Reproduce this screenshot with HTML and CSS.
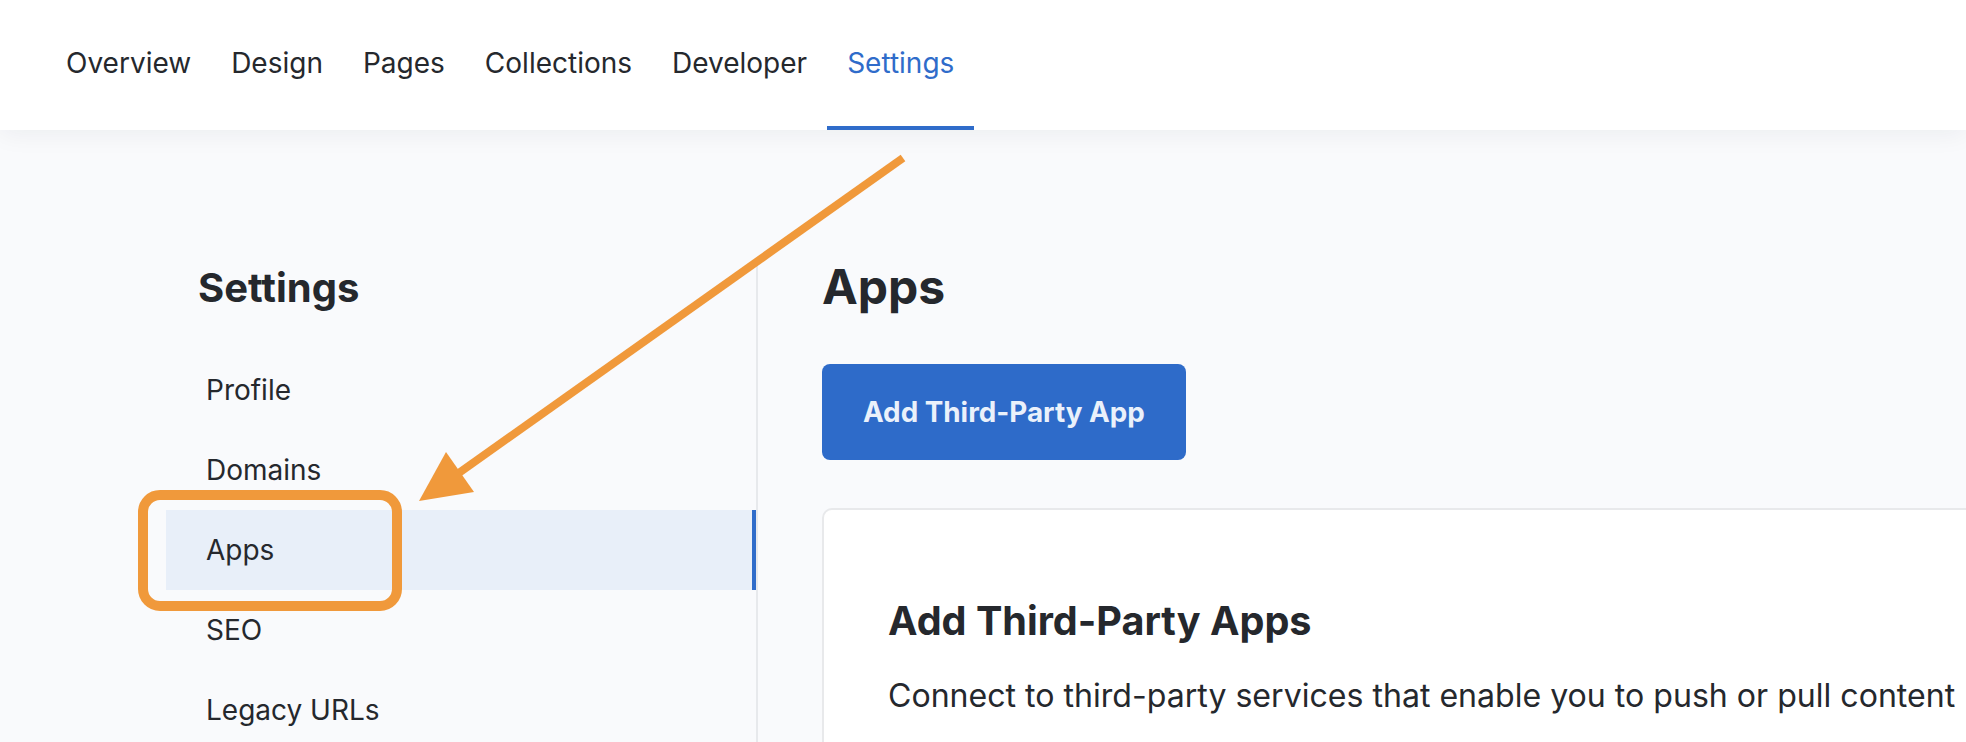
FILE: index.html
```html
<!DOCTYPE html>
<html lang="en">
<head>
<meta charset="utf-8">
<title>Settings - Apps</title>
<link rel="stylesheet" href="styles.css">
</head>
<body>
<header class="topnav">
  <nav class="tabs">
    <a class="tab">Overview</a>
    <a class="tab">Design</a>
    <a class="tab">Pages</a>
    <a class="tab">Collections</a>
    <a class="tab">Developer</a>
    <a class="tab active">Settings</a>
  </nav>
</header>
<div class="layout">
  <aside class="sidebar">
    <h2 class="sidebar-title">Settings</h2>
    <ul class="side-list">
      <li class="side-item">Profile</li>
      <li class="side-item">Domains</li>
      <li class="side-item active">Apps</li>
      <li class="side-item">SEO</li>
      <li class="side-item">Legacy URLs</li>
    </ul>
  </aside>
  <main class="content">
    <h1 class="page-title">Apps</h1>
    <div class="actions">
      <button class="btn-primary">Add Third-Party App</button>
    </div>
    <section class="card">
      <h3 class="card-title">Add Third-Party Apps</h3>
      <p class="card-text">Connect to third-party services that enable you to push or pull content</p>
    </section>
  </main>
</div>
<svg class="annotation" width="1966" height="742" viewBox="0 0 1966 742" aria-hidden="true">
  <rect x="143" y="495" width="254" height="111" rx="17" ry="17" fill="none" stroke="#f0993b" stroke-width="10"/>
  <line x1="903" y1="158" x2="456" y2="475" stroke="#f0993b" stroke-width="8"/>
  <polygon points="419,501 446,452 474,492" fill="#f0993b"/>
</svg>
</body>
</html>
```
FILE: styles.css
```css
html, body {
  margin: 0;
  padding: 0;
  overflow: hidden;
}

body {
  position: relative;
  width: 1966px;
  height: 742px;
  background: #f9fafc;
  color: #25282d;
  font-family: Inter, "Noto Sans", sans-serif;
}

.topnav {
  position: relative;
  z-index: 1;
  height: 130px;
  background: #ffffff;
  box-shadow: 0 4px 24px rgba(20, 30, 50, 0.06);
}

.tabs {
  display: flex;
  height: 130px;
  padding-left: 46px;
}

.tab {
  box-sizing: border-box;
  display: flex;
  align-items: center;
  height: 130px;
  padding: 0 20px;
  border-bottom: 4px solid transparent;
  font-size: 28px;
  color: #25282d;
  cursor: pointer;
}

.tab.active {
  color: #2f6cca;
  border-bottom-color: #2f6cca;
}

.layout {
  display: flex;
  min-height: 612px;
  box-sizing: border-box;
  padding-top: 128px;
  padding-left: 166px;
}

.sidebar {
  flex: none;
  width: 590px;
  border-right: 2px solid #e7e9ec;
  padding-top: 6px;
}

.sidebar-title {
  margin: 0 0 38px 32px;
  font-size: 40px;
  line-height: 48px;
  font-weight: 700;
}

.side-list {
  list-style: none;
  margin: 0;
  padding: 0;
}

.side-item {
  display: flex;
  align-items: center;
  height: 80px;
  padding-left: 40px;
  font-size: 28px;
}

.side-item.active {
  background: #e8eff9;
  box-shadow: inset -4px 0 0 #2f6cca;
}

.content {
  flex: none;
  width: 1400px;
  padding-left: 64px;
}

.page-title {
  margin: 0;
  font-size: 48px;
  line-height: 58px;
  font-weight: 700;
}

.actions {
  margin-top: 48px;
}

.btn-primary {
  display: inline-flex;
  align-items: center;
  height: 96px;
  padding: 0 41px;
  border: 0;
  border-radius: 8px;
  background: #2e6bc9;
  color: #eaf1fb;
  font-family: Inter, "Noto Sans", sans-serif;
  font-size: 27.8px;
  font-weight: 700;
}

.card {
  margin-top: 48px;
  height: 320px;
  padding: 87px 64px 0;
  background: #ffffff;
  border: 2px solid #e8e9eb;
  border-radius: 10px;
}

.card-title {
  margin: 0;
  font-size: 39.6px;
  line-height: 48px;
  font-weight: 700;
}

.card-text {
  margin: 27px 0 0;
  font-size: 32.1px;
  line-height: 48px;
  white-space: nowrap;
}

.annotation {
  position: absolute;
  left: 0;
  top: 0;
  z-index: 5;
  pointer-events: none;
}
```
